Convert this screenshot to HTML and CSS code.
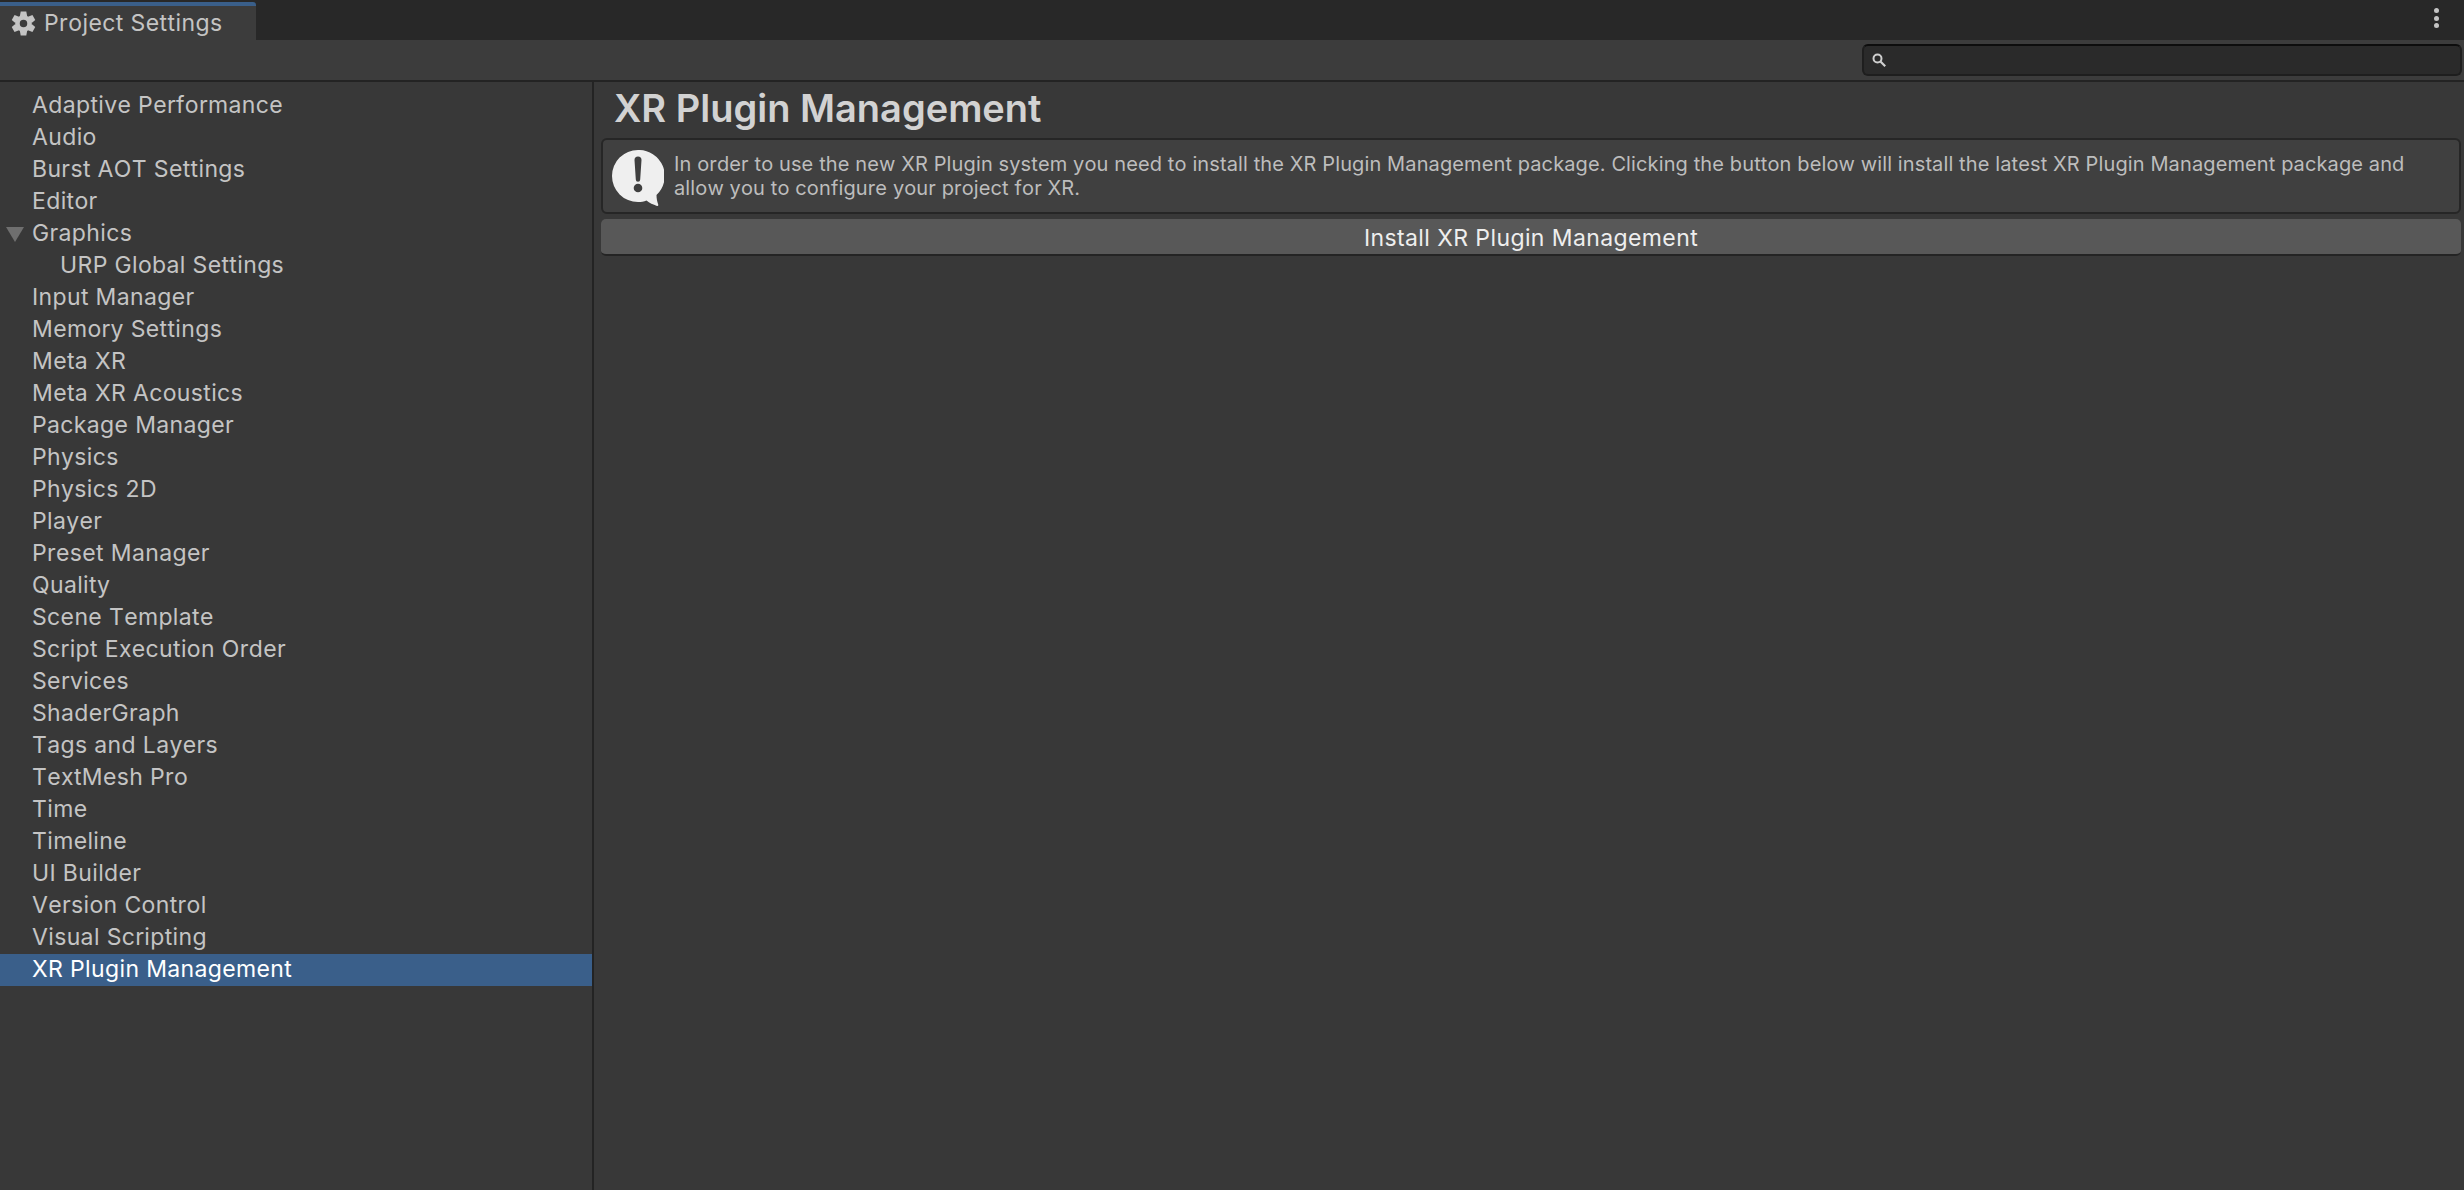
FILE: index.html
```html
<!DOCTYPE html>
<html lang="en">
<head>
<meta charset="utf-8">
<title>Project Settings</title>
<link rel="stylesheet" href="styles.css">
</head>
<body>
<div class="window">
  <header class="tabbar">
    <div class="tab">
      <svg class="gear" viewBox="0 0 24 24" width="25" height="25" fill="#c4c4c4">
        <circle cx="12" cy="12" r="5.800" fill="none" stroke="#c4c4c4" stroke-width="4.400"/>
        <path d="M9.300 .5h5.400l.8 4.500h-7z"/>
        <path transform="rotate(60 12 12)" d="M9.300 .5h5.400l.8 4.500h-7z"/>
        <path transform="rotate(120 12 12)" d="M9.300 .5h5.400l.8 4.500h-7z"/>
        <path transform="rotate(180 12 12)" d="M9.300 .5h5.400l.8 4.500h-7z"/>
        <path transform="rotate(240 12 12)" d="M9.300 .5h5.400l.8 4.500h-7z"/>
        <path transform="rotate(300 12 12)" d="M9.300 .5h5.400l.8 4.500h-7z"/>
      </svg>
      <span class="tab-title">Project Settings</span>
    </div>
    <div class="kebab"><i></i><i></i><i></i></div>
  </header>
  <div class="toolbar">
    <div class="search">
      <svg viewBox="0 0 14 14" width="14" height="14"><circle cx="5.500" cy="5.500" r="4" fill="none" stroke="#cfcfcf" stroke-width="2"/><path d="M8.500 8.500 13.200 13.200" stroke="#cfcfcf" stroke-width="2.200"/></svg>
    </div>
  </div>
  <div class="main">
    <nav class="sidebar">
      <div class="row">Adaptive Performance</div>
      <div class="row">Audio</div>
      <div class="row">Burst AOT Settings</div>
      <div class="row">Editor</div>
      <div class="row"><span class="arrow"></span>Graphics</div>
      <div class="row child">URP Global Settings</div>
      <div class="row">Input Manager</div>
      <div class="row">Memory Settings</div>
      <div class="row">Meta XR</div>
      <div class="row">Meta XR Acoustics</div>
      <div class="row">Package Manager</div>
      <div class="row">Physics</div>
      <div class="row">Physics 2D</div>
      <div class="row">Player</div>
      <div class="row">Preset Manager</div>
      <div class="row">Quality</div>
      <div class="row">Scene Template</div>
      <div class="row">Script Execution Order</div>
      <div class="row">Services</div>
      <div class="row">ShaderGraph</div>
      <div class="row">Tags and Layers</div>
      <div class="row">TextMesh Pro</div>
      <div class="row">Time</div>
      <div class="row">Timeline</div>
      <div class="row">UI Builder</div>
      <div class="row">Version Control</div>
      <div class="row">Visual Scripting</div>
      <div class="row selected">XR Plugin Management</div>
    </nav>
    <section class="content">
      <h1 class="heading">XR Plugin Management</h1>
      <div class="helpbox">
        <svg class="warn" viewBox="0 0 52 56" width="52" height="56"><path fill="#efefef" d="M26 0a26 26 0 1 0 0 52c3 0 6-.5 8.500-1.500 3 2.500 6.500 4 10.500 5.500 1 0 1.500-.5 1.200-1.500-1-3-1.700-6-1.700-9.500A26 26 0 0 0 26 0z"/><path fill="#3f3f3f" d="M22.500 10a3.500 3.500 0 0 1 7 0l-1.300 19.500a2.200 2.200 0 0 1-4.400 0z"/><circle cx="26" cy="38" r="4.300" fill="#3f3f3f"/></svg>
        <p class="helptext">In order to use the new XR Plugin system you need to install the XR Plugin Management package. Clicking the button below will install the latest XR Plugin Management package and allow you to configure your project for XR.</p>
      </div>
      <button class="install">Install XR Plugin Management</button>
    </section>
  </div>
</div>
</body>
</html>
```

FILE: styles.css
```css
* { box-sizing: border-box; }
html, body { margin: 0; height: 100%; }
body { background: #383838; font-family: Inter, "Liberation Sans", sans-serif; font-kerning: none; color: #c4c4c4; overflow: hidden; }
.window { display: flex; flex-direction: column; height: 1190px; }
.tabbar { height: 40px; flex: none; background: #282828; display: flex; justify-content: space-between; }
.tab { width: 256px; height: 38px; background: #3c3c3c; border-top: 4px solid #3a5f8a; margin-top: 2px; border-top-right-radius: 3px; display: flex; align-items: center; padding-left: 11px; gap: 8px; }
.tab-title { font-size: 23px; letter-spacing: .42px; color: #c4c4c4; }
.kebab { display: flex; flex-direction: column; gap: 2.500px; padding-top: 8px; width: 24px; align-items: center; margin-right: 16px; }
.kebab i { width: 5px; height: 5px; border-radius: 50%; background: #c4c4c4; }
.toolbar { height: 42px; flex: none; background: #3c3c3c; border-bottom: 2px solid #232323; display: flex; justify-content: flex-end; align-items: flex-start; padding-top: 4px; padding-right: 2px; }
.search { width: 600px; height: 32px; background: #2a2a2a; border: 2px solid #1e1e1e; border-top-color: #0d0d0d; border-radius: 6px; display: flex; align-items: center; padding-left: 8px; }
.main { flex: 1; display: flex; min-height: 0; }
.sidebar { width: 594px; flex: none; border-right: 2px solid #232323; padding-top: 8px; }
.row { height: 32px; line-height: 30px; padding-left: 32px; font-size: 23px; letter-spacing: .36px; position: relative; color: #c4c4c4; white-space: nowrap; }
.row.child { padding-left: 60px; }
.row.selected { background: #3a5f8a; color: #fff; }
.arrow { position: absolute; left: 6px; top: 9px; width: 0; height: 0; border-left: 9px solid transparent; border-right: 9px solid transparent; border-top: 15px solid #6f6f6f; }
.content { flex: 1; padding: 0 3px 0 7px; min-width: 0; }
.heading { margin: 0; padding-left: 13px; height: 56px; line-height: 52px; font-size: 38px; font-weight: 600; color: #d2d2d2; }
.helpbox { height: 76px; background: #404040; border: 2px solid #262626; border-radius: 6px; display: flex; align-items: center; padding-left: 9px; gap: 10px; }
.warn { flex: none; margin-top: 3px; }
.helptext { margin: 0; font-size: 20px; line-height: 24px; letter-spacing: .12px; color: #bdbdbd; padding: 0 40px 0 0; }
.install { display: block; width: 100%; height: 37px; margin-top: 5px; background: #585858; border: 0; border-bottom: 2px solid #242424; border-radius: 5px; color: #eee; font: 23px Inter, "Liberation Sans", sans-serif; letter-spacing: .4px; padding: 2px 0 0; }
```
